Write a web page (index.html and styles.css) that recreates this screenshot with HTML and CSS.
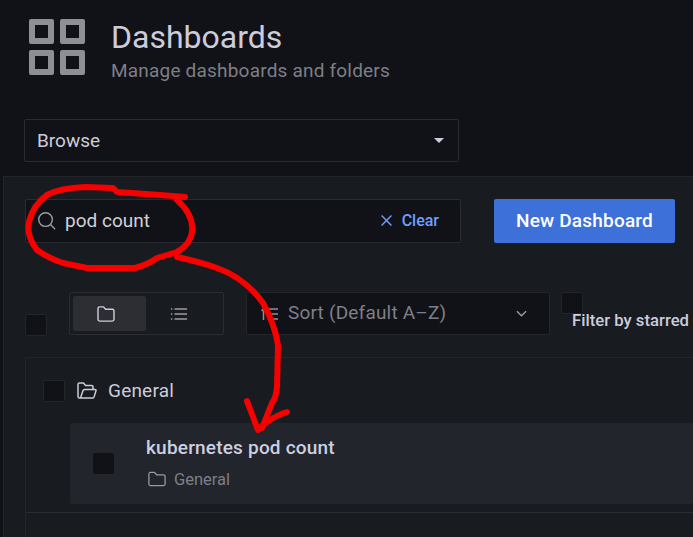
FILE: index.html
```html
<!DOCTYPE html>
<html lang="en">
	<head>
		<meta charset="utf-8" />
		<title>Dashboards</title>
		<link rel="stylesheet" href="styles.css">
	</head>
	<body>
		<header class="page-header">
			<svg class="page-icon" viewBox="0 0 56 56">
				<path fill="#8e8e95" fill-rule="evenodd" d="M2 0h21a2 2 0 0 1 2 2v21a2 2 0 0 1-2 2H2a2 2 0 0 1-2-2V2a2 2 0 0 1 2-2zM6 6v13h13V6zM33 0h21a2 2 0 0 1 2 2v21a2 2 0 0 1-2 2H33a2 2 0 0 1-2-2V2a2 2 0 0 1 2-2zM37 6v13h13V6zM2 31h21a2 2 0 0 1 2 2v21a2 2 0 0 1-2 2H2a2 2 0 0 1-2-2V33a2 2 0 0 1 2-2zM6 37v13h13V37zM33 31h21a2 2 0 0 1 2 2v21a2 2 0 0 1-2 2H33a2 2 0 0 1-2-2V33a2 2 0 0 1 2-2zM37 37v13h13V37z"/>
			</svg>
			<div>
				<h1 class="page-title">Dashboards</h1>
				<div class="page-sub">Manage dashboards and folders</div>
			</div>
		</header>

		<div class="nav-select">
			<span>Browse</span>
			<span class="caret"></span>
		</div>

		<main class="panel">
			<div class="search-row">
				<div class="search">
					<svg class="search-icon" viewBox="0 0 20 20">
						<circle cx="9" cy="9" r="7.2" fill="none" stroke="#9a9ba1" stroke-width="1.5"/>
						<path d="M14.2 14.2l4.4 4.4" stroke="#9a9ba1" stroke-width="1.5" stroke-linecap="round"/>
					</svg>
					<span class="search-text">pod count</span>
					<span class="clear">
						<svg class="clear-icon" viewBox="0 0 10 10">
							<path d="M0.5 0.5l9 9M9.5 0.5l-9 9" stroke="#6e9fff" stroke-width="1.3"/>
						</svg>
						Clear
					</span>
				</div>
				<button class="btn-primary">New Dashboard</button>
			</div>

			<div class="controls-row">
				<span class="checkbox checkbox-all"></span>
				<div class="toggle">
					<span class="toggle-item active">
						<svg class="toggle-icon" viewBox="0 0 20 18">
							<path d="M1 3a2 2 0 0 1 2-2h4.2l2.3 2.6H17a2 2 0 0 1 2 2V15a2 2 0 0 1-2 2H3a2 2 0 0 1-2-2z" fill="none" stroke="#ccccdc" stroke-width="1.6" stroke-linejoin="round"/>
						</svg>
					</span>
					<span class="toggle-item">
						<svg class="toggle-icon" viewBox="0 0 20 14">
							<path d="M5 1.5h14M5 7h14M5 12.5h14" stroke="#9a9ba1" stroke-width="1.6"/>
							<path d="M1 1.5h1.6M1 7h1.6M1 12.5h1.6" stroke="#9a9ba1" stroke-width="1.6"/>
						</svg>
					</span>
				</div>
				<div class="sort">
					<svg class="sort-icon" viewBox="0 0 18 14">
						<path d="M2.5 13V2M0.5 4l2-2.5L4.5 4M7 2h10M7 7h10M7 12h10" fill="none" stroke="#8e8e95" stroke-width="1.5"/>
					</svg>
					<span class="sort-text">Sort (Default A–Z)</span>
					<svg class="chevron" viewBox="0 0 12 7">
						<path d="M1 1l5 5 5-5" fill="none" stroke="#9a9ba1" stroke-width="1.5"/>
					</svg>
				</div>
				<div class="starred">
					<span class="checkbox"></span>
					<span class="starred-label">Filter by starred</span>
				</div>
			</div>

			<section class="results">
				<div class="section-head">
					<span class="checkbox"></span>
					<svg class="open-folder" viewBox="0 0 20 17">
						<path d="M3.5 16H2.5A1.5 1.5 0 0 1 1 14.5V2.5A1.5 1.5 0 0 1 2.5 1h4l2 2.4h6A1.5 1.5 0 0 1 16 5v2.2M3.5 16L6 8.6a2 2 0 0 1 1.6-1.2H18a1 1 0 0 1 1 1.3l-1.9 6.2a1.5 1.5 0 0 1-1.4 1.1z" fill="none" stroke="#ccccdc" stroke-width="1.5" stroke-linejoin="round"/>
					</svg>
					<span class="section-name">General</span>
				</div>
				<div class="item">
					<span class="checkbox checkbox-item"></span>
					<div class="item-body">
						<div class="item-title">kubernetes pod count</div>
						<div class="item-meta">
							<svg class="meta-icon" viewBox="0 0 20 17">
								<path d="M1 3a1.8 1.8 0 0 1 1.8-1.8h4.4l2.2 2.6h7.8A1.8 1.8 0 0 1 19 5.6V14a1.8 1.8 0 0 1-1.8 1.8H2.8A1.8 1.8 0 0 1 1 14z" fill="none" stroke="#9a9ba1" stroke-width="1.4" stroke-linejoin="round"/>
							</svg>
							<span>General</span>
						</div>
					</div>
				</div>
				<div class="results-sep"></div>
			</section>
		</main>

		<svg class="scribble" viewBox="0 0 693 537">
			<path d="M185 197L160 195L117 192L113 188L85 187Q60 188 47 195Q33 205 29 222Q26 235 37 250Q48 258 63 263L87 268L135 268Q147 265 157 258L177 252Q190 245 192 232Q194 215 177 200"/>
			<path d="M177 257Q200 262 217 268Q245 278 263 303Q275 325 278 345L277 387Q276 398 272 403L262 428"/>
			<path d="M247 401L258 430L267 422Q277 415 287 412"/>
		</svg>
	</body>
</html>
```

FILE: styles.css
```css
* {
	margin: 0;
	box-sizing: border-box;
}
html,
body {
	height: 100%;
}
body {
	background: #111217;
	color: #ccccdc;
	font: 16px Roboto, sans-serif;
	overflow: hidden;
	position: relative;
	display: flex;
	flex-direction: column;
}
.page-header {
	display: flex;
	gap: 27px;
	padding: 19px 0 0 29px;
	height: 119px;
	flex: none;
}
.page-icon {
	width: 56px;
	height: 56px;
	flex: none;
}
.page-title {
	font-size: 32px;
	font-weight: 400;
	line-height: 38px;
	margin: -1px 0 0 -1px;
}
.page-sub {
	color: #7e7f87;
	font-size: 19px;
	line-height: 24px;
	letter-spacing: 0.2px;
	margin: 3px 0 0 -1px;
}
.nav-select {
	width: 435px;
	height: 43px;
	margin: 0 0 14px 24px;
	padding: 0 14px 0 12px;
	border: 1px solid #2a2c32;
	border-radius: 2px;
	display: flex;
	align-items: center;
	justify-content: space-between;
	font-size: 19px;
	flex: none;
}
.caret {
	border: 5px solid transparent;
	border-top-color: #ccccdc;
	border-bottom-width: 0;
}
.panel {
	margin-left: 3px;
	flex: 1;
	min-height: 0;
	overflow: hidden;
	background: #181b1f;
	border-top: 1px solid #23252b;
	border-left: 1px solid #23252b;
	padding: 22px 0 0 21px;
}
.search-row {
	display: flex;
	gap: 33px;
}
.search {
	width: 436px;
	height: 44px;
	background: #111217;
	border: 1px solid #2a2c32;
	border-radius: 2px;
	display: flex;
	align-items: center;
	padding: 0 21px 0 11px;
}
.search-icon {
	width: 19px;
	height: 19px;
	flex: none;
	margin-top: -2px;
}
.search-text {
	color: #d0d0d8;
	font-size: 19px;
	line-height: 22px;
	margin-left: 9px;
	flex: 1;
}
.clear {
	color: #6e9fff;
	font-size: 16px;
	font-weight: 500;
	display: flex;
	align-items: center;
	gap: 10px;
	margin-top: -2px;
}
.clear-icon {
	width: 11px;
	height: 11px;
}
.btn-primary {
	width: 181px;
	height: 44px;
	padding-bottom: 2px;
	background: #3d71d9;
	border: 0;
	border-radius: 2px;
	color: #fff;
	font: 500 19px Roboto, sans-serif;
	letter-spacing: 0.2px;
}
.controls-row {
	display: flex;
	align-items: flex-start;
	margin-top: 49px;
	height: 65px;
}
.checkbox {
	display: block;
	width: 22px;
	height: 22px;
	flex: none;
	background: #111217;
	border: 1px solid #23252b;
	border-radius: 2px;
}
.checkbox-all {
	margin-top: 22px;
}
.toggle {
	margin-left: 22px;
	width: 155px;
	height: 43px;
	border: 1px solid #2a2c32;
	border-radius: 2px;
	padding: 3px;
	display: flex;
}
.toggle-item {
	flex: 1;
	display: flex;
	align-items: center;
	justify-content: center;
	border-radius: 2px;
	padding-right: 8px;
}
.toggle-item.active {
	background: #2c2e33;
	flex: 0 0 73px;
}
.toggle-icon {
	width: 18px;
	height: 16px;
}
.sort {
	margin-left: 22px;
	width: 304px;
	height: 43px;
	background: #111217;
	border: 1px solid #23252b;
	border-radius: 2px;
	display: flex;
	align-items: center;
	padding: 0 22px 0 14px;
}
.sort-icon {
	width: 18px;
	height: 14px;
	flex: none;
}
.sort-text {
	color: #7e7f87;
	font-size: 19px;
	letter-spacing: 0.2px;
	line-height: 22px;
	margin: -2px 0 0 9px;
	flex: 1;
}
.chevron {
	width: 11px;
	height: 7px;
}
.starred {
	margin-left: 11px;
}
.starred-label {
	display: block;
	margin: -3px 0 0 11px;
	font-size: 16.7px;
	font-weight: 500;
	color: #ccccdc;
	white-space: nowrap;
}
.results {
	border-top: 1px solid #23252b;
	border-left: 1px solid #23252b;
	height: 180px;
}
.section-head {
	display: flex;
	align-items: center;
	height: 65px;
	padding-left: 17px;
}
.open-folder {
	width: 20px;
	height: 17px;
	margin-left: 12px;
}
.section-name {
	font-size: 19px;
	letter-spacing: 0.2px;
	margin-left: 11px;
}
.item {
	margin-left: 44px;
	height: 81px;
	background: #22252b;
	border-radius: 2px;
	display: flex;
	align-items: center;
	padding-left: 23px;
}
.checkbox-item {
	width: 21px;
	height: 21px;
	border-color: #111217;
}
.item-body {
	margin-left: 32px;
}
.item-title {
	font-size: 19px;
	font-weight: 500;
	letter-spacing: 0.2px;
	line-height: 24px;
	color: #ccd0e0;
	margin-top: -3px;
}
.item-meta {
	display: flex;
	align-items: center;
	gap: 8px;
	margin-top: 10px;
	padding-left: 2px;
	color: #7e7f87;
	font-size: 16.5px;
}
.meta-icon {
	width: 18px;
	height: 16px;
}
.results-sep {
	margin-top: 8px;
	border-top: 1px solid #2a2c32;
}
.scribble {
	position: absolute;
	left: 0;
	top: 0;
	width: 693px;
	height: 537px;
	fill: none;
	stroke: #f70000;
	stroke-width: 6;
	stroke-linecap: round;
	stroke-linejoin: round;
}
```
